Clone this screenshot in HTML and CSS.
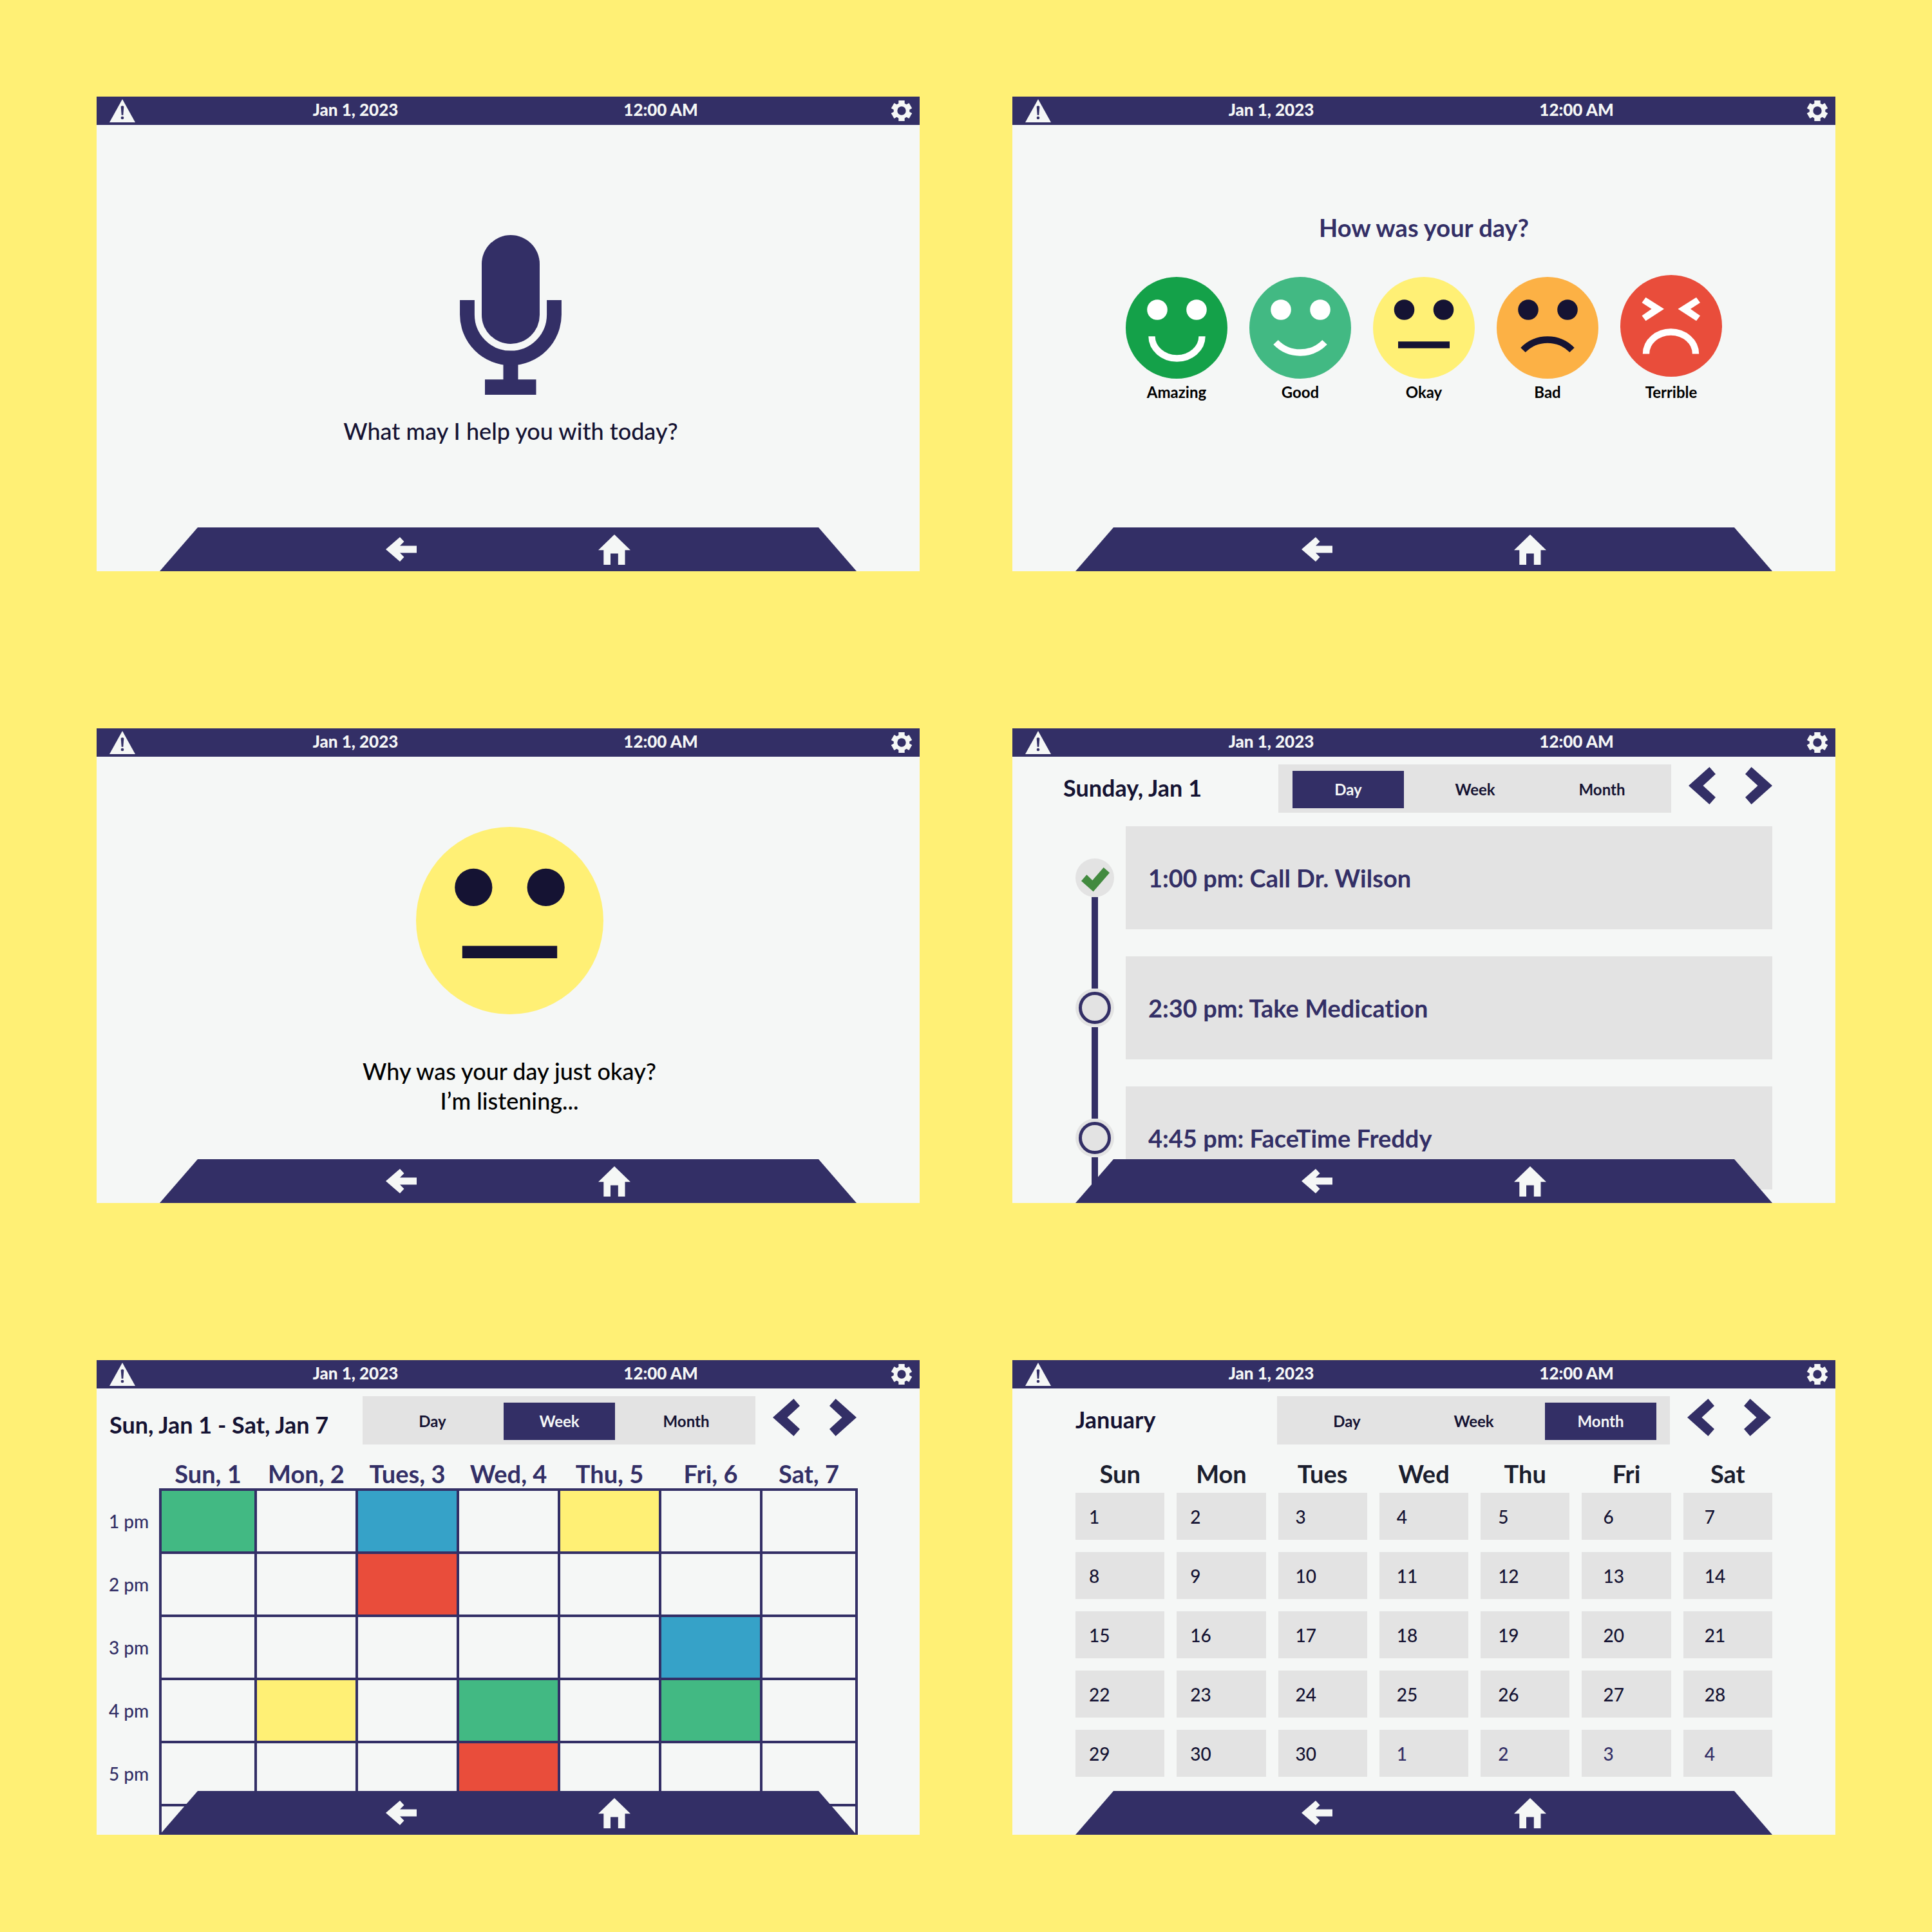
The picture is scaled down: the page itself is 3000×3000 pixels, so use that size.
FILE: index.html
```
<!DOCTYPE html>
<html lang="en">
<head>
<meta charset="utf-8">
<meta name="viewport" content="width=device-width, initial-scale=1">
<title>Daily companion screens</title>
<link rel="stylesheet" href="styles.css">
</head>
<body>
<svg class="sprite" aria-hidden="true">
  <symbol id="warning" viewBox="0 0 40 36"><path class="fill-light" d="M20 0 40 36H0z"/><path class="fill-navy" d="M17.700 11.500Q20 9 22.300 11.500L21.300 24.700H18.700z"/><circle class="fill-navy" cx="20" cy="29" r="2.300"/></symbol>
  <symbol id="gear" viewBox="0 0 32 32"><g class="fill-light"><circle cx="16" cy="16" r="12.300"/><path d="M11.300 0h9.400v32h-9.400z"/><path d="M11.300 0h9.400v32h-9.400z" transform="rotate(60 16 16)"/><path d="M11.300 0h9.400v32h-9.400z" transform="rotate(120 16 16)"/></g><circle class="fill-navy" cx="16" cy="16" r="6.700"/></symbol>
  <symbol id="arrow" viewBox="0 0 48 38"><path class="fill-light" d="M0 19 22 0 28.500 7 22 13.600H48V24.600H22L28.500 31 22 38z"/></symbol>
  <symbol id="home" viewBox="0 0 50 47"><path class="fill-light" d="M25 0 50 24.300H41.500V47H30.800V29.500H19V47H8.300V24.300H0z"/></symbol>
  <symbol id="prev" viewBox="0 0 42 58"><path class="fill-navy" d="M32.400 0 42 11 22.500 29 42 47 32.400 58 0 29z"/></symbol>
  <symbol id="next" viewBox="0 0 42 58"><path class="fill-navy" d="M9.600 0 0 11 19.500 29 0 47 9.600 58 42 29z"/></symbol>
  <symbol id="face-okay" viewBox="0 0 158 158"><circle cx="79" cy="79" r="79" fill="#fff075"/><g class="fill-ink"><circle cx="48.500" cy="51" r="15.800"/><circle cx="109.500" cy="51" r="15.800"/><path d="M39 100.300h80v10.400H39z"/></g></symbol>
</svg>

<main class="board">

  <section class="screen" aria-label="Voice assistant">
    <header class="status"><button class="icon-button" aria-label="Alerts"><svg class="i-warning"><use href="#warning"/></svg></button><time class="status-text">Jan 1, 2023</time><time class="status-text">12:00 AM</time><button class="icon-button end" aria-label="Settings"><svg class="i-gear"><use href="#gear"/></svg></button></header>
    <div class="voice">
      <svg class="mic" viewBox="0 0 158 248" role="img" aria-label="Microphone"><g class="fill-navy"><rect x="34" width="90" height="169" rx="45"/><path d="M67.500 195h23v29.300h28V248H39v-23.700h28.500z"/></g><path d="M11.500 101v22.500a67.500 67.500 0 0 0 135 0V101" fill="none" stroke="#332f66" stroke-width="22.800"/></svg>
      <p class="prompt ink">What may I help you with today?</p>
    </div>
    <nav class="dock" aria-label="Voice screen"><button class="icon-button" aria-label="Back"><svg class="i-arrow"><use href="#arrow"/></svg></button><button class="icon-button" aria-label="Home"><svg class="i-home"><use href="#home"/></svg></button></nav>
  </section>

  <section class="screen" aria-label="Mood check">
    <header class="status"><button class="icon-button" aria-label="Alerts"><svg class="i-warning"><use href="#warning"/></svg></button><time class="status-text">Jan 1, 2023</time><time class="status-text">12:00 AM</time><button class="icon-button end" aria-label="Settings"><svg class="i-gear"><use href="#gear"/></svg></button></header>
    <div class="mood">
      <h2 class="question">How was your day?</h2>
      <div class="faces">
        <button class="face"><svg viewBox="0 0 158 158"><circle cx="79" cy="79" r="79" fill="#14a149"/><circle cx="49" cy="51" r="15.800" fill="#fff"/><circle cx="110" cy="51" r="15.800" fill="#fff"/><path d="M40.500 92.300a39 34.200 0 0 0 78 0" fill="none" stroke="#fff" stroke-width="10.400"/></svg>Amazing</button>
        <button class="face"><svg viewBox="0 0 158 158"><circle cx="79" cy="79" r="79" fill="#42b983"/><circle cx="49" cy="51" r="15.800" fill="#fff"/><circle cx="110" cy="51" r="15.800" fill="#fff"/><path d="M41 101.500a53 53 0 0 0 76 0" fill="none" stroke="#fff" stroke-width="10.400"/></svg>Good</button>
        <button class="face"><svg viewBox="0 0 158 158"><use href="#face-okay"/></svg>Okay</button>
        <button class="face"><svg viewBox="0 0 158 158"><circle cx="79" cy="79" r="79" fill="#fcb145"/><g class="fill-ink"><circle cx="49" cy="51" r="15.800"/><circle cx="110" cy="51" r="15.800"/></g><path d="M41 113.500a53 53 0 0 1 76 0" fill="none" stroke="#151333" stroke-width="10.400"/></svg>Bad</button>
        <button class="face"><svg class="tall" viewBox="0 0 158 161"><circle cx="79" cy="79" r="79" fill="#e94d3b"/><path d="M39.500 34.700 68 52.800 39.500 71.300 33.500 63.300 48.500 52.800 33.500 43zM118 34.700 89.500 52.800 118 71.300 124 63.300 109 52.800 124 43z" fill="#fff"/><path d="M40 122.500a38.500 34 0 0 1 77 0" fill="none" stroke="#fff" stroke-width="10.400"/></svg>Terrible</button>
      </div>
    </div>
    <nav class="dock" aria-label="Mood screen"><button class="icon-button" aria-label="Back"><svg class="i-arrow"><use href="#arrow"/></svg></button><button class="icon-button" aria-label="Home"><svg class="i-home"><use href="#home"/></svg></button></nav>
  </section>

  <section class="screen" aria-label="Mood follow-up">
    <header class="status"><button class="icon-button" aria-label="Alerts"><svg class="i-warning"><use href="#warning"/></svg></button><time class="status-text">Jan 1, 2023</time><time class="status-text">12:00 AM</time><button class="icon-button end" aria-label="Settings"><svg class="i-gear"><use href="#gear"/></svg></button></header>
    <div class="listening">
      <svg class="big-face" role="img" aria-label="Okay face"><use href="#face-okay"/></svg>
      <p class="prompt">Why was your day just okay?<br>I’m listening...</p>
    </div>
    <nav class="dock" aria-label="Follow-up screen"><button class="icon-button" aria-label="Back"><svg class="i-arrow"><use href="#arrow"/></svg></button><button class="icon-button" aria-label="Home"><svg class="i-home"><use href="#home"/></svg></button></nav>
  </section>

  <section class="screen" aria-label="Day calendar">
    <header class="status"><button class="icon-button" aria-label="Alerts"><svg class="i-warning"><use href="#warning"/></svg></button><time class="status-text">Jan 1, 2023</time><time class="status-text">12:00 AM</time><button class="icon-button end" aria-label="Settings"><svg class="i-gear"><use href="#gear"/></svg></button></header>
    <div class="toolbar toolbar-day">
      <h2 class="period">Sunday, Jan 1</h2>
      <div class="tabs"><button class="tab active">Day</button><button class="tab">Week</button><button class="tab">Month</button></div>
      <div class="pager"><button class="icon-button" aria-label="Previous"><svg class="i-chevron"><use href="#prev"/></svg></button><button class="icon-button" aria-label="Next"><svg class="i-chevron"><use href="#next"/></svg></button></div>
    </div>
    <ol class="agenda">
      <li class="event"><div class="track"><span class="lead hidden"></span><svg class="dot" viewBox="0 0 60 60" role="img" aria-label="Done"><circle cx="30" cy="30" r="30" fill="#e3e3e3"/><path d="M43.700 14 53 22.300 27.700 51.400 9 35 17.400 25.200 26.300 34z" fill="#428a3f"/></svg><span class="tail"></span></div><p class="card">1:00 pm: Call Dr. Wilson</p></li>
      <li class="event"><div class="track"><span class="lead"></span><svg class="dot" viewBox="0 0 60 60" role="img" aria-label="To do"><circle cx="30" cy="30" r="30" fill="#e3e3e3"/><circle cx="30" cy="30" r="22.500" fill="none" stroke="#332f66" stroke-width="5"/></svg><span class="tail"></span></div><p class="card">2:30 pm: Take Medication</p></li>
      <li class="event"><div class="track"><span class="lead"></span><svg class="dot" viewBox="0 0 60 60" role="img" aria-label="To do"><circle cx="30" cy="30" r="30" fill="#e3e3e3"/><circle cx="30" cy="30" r="22.500" fill="none" stroke="#332f66" stroke-width="5"/></svg><span class="tail"></span></div><p class="card">4:45 pm: FaceTime Freddy</p></li>
    </ol>
    <nav class="dock" aria-label="Day screen"><button class="icon-button" aria-label="Back"><svg class="i-arrow"><use href="#arrow"/></svg></button><button class="icon-button" aria-label="Home"><svg class="i-home"><use href="#home"/></svg></button></nav>
  </section>

  <section class="screen" aria-label="Week calendar">
    <header class="status"><button class="icon-button" aria-label="Alerts"><svg class="i-warning"><use href="#warning"/></svg></button><time class="status-text">Jan 1, 2023</time><time class="status-text">12:00 AM</time><button class="icon-button end" aria-label="Settings"><svg class="i-gear"><use href="#gear"/></svg></button></header>
    <div class="toolbar toolbar-week">
      <h2 class="period">Sun, Jan 1 - Sat, Jan 7</h2>
      <div class="tabs"><button class="tab">Day</button><button class="tab active">Week</button><button class="tab">Month</button></div>
      <div class="pager"><button class="icon-button" aria-label="Previous"><svg class="i-chevron"><use href="#prev"/></svg></button><button class="icon-button" aria-label="Next"><svg class="i-chevron"><use href="#next"/></svg></button></div>
    </div>
    <div class="week-wrap">
      <table class="week">
        <colgroup><col class="col-hour"><col class="col-edge"><col class="col-day"><col class="col-day"><col class="col-day"><col class="col-day"><col class="col-day"><col class="col-edge"></colgroup>
        <thead><tr><td></td><th scope="col">Sun, 1</th><th scope="col">Mon, 2</th><th scope="col">Tues, 3</th><th scope="col">Wed, 4</th><th scope="col">Thu, 5</th><th scope="col">Fri, 6</th><th scope="col">Sat, 7</th></tr></thead>
        <tbody>
          <tr><th scope="row">1 pm</th><td class="green"></td><td></td><td class="blue"></td><td></td><td class="yellow"></td><td></td><td></td></tr>
          <tr><th scope="row">2 pm</th><td></td><td></td><td class="red"></td><td></td><td></td><td></td><td></td></tr>
          <tr><th scope="row">3 pm</th><td></td><td></td><td></td><td></td><td></td><td class="blue"></td><td></td></tr>
          <tr><th scope="row">4 pm</th><td></td><td class="yellow"></td><td></td><td class="green"></td><td></td><td class="green"></td><td></td></tr>
          <tr><th scope="row">5 pm</th><td></td><td></td><td></td><td class="red"></td><td></td><td></td><td></td></tr>
          <tr><th scope="row"></th><td></td><td></td><td></td><td></td><td></td><td></td><td></td></tr>
        </tbody>
      </table>
    </div>
    <nav class="dock" aria-label="Week screen"><button class="icon-button" aria-label="Back"><svg class="i-arrow"><use href="#arrow"/></svg></button><button class="icon-button" aria-label="Home"><svg class="i-home"><use href="#home"/></svg></button></nav>
  </section>

  <section class="screen" aria-label="Month calendar">
    <header class="status"><button class="icon-button" aria-label="Alerts"><svg class="i-warning"><use href="#warning"/></svg></button><time class="status-text">Jan 1, 2023</time><time class="status-text">12:00 AM</time><button class="icon-button end" aria-label="Settings"><svg class="i-gear"><use href="#gear"/></svg></button></header>
    <div class="toolbar toolbar-month">
      <h2 class="period">January</h2>
      <div class="tabs"><button class="tab">Day</button><button class="tab">Week</button><button class="tab active">Month</button></div>
      <div class="pager"><button class="icon-button" aria-label="Previous"><svg class="i-chevron"><use href="#prev"/></svg></button><button class="icon-button" aria-label="Next"><svg class="i-chevron"><use href="#next"/></svg></button></div>
    </div>
    <div class="month-wrap">
      <table class="month">
        <thead><tr><th scope="col">Sun</th><th scope="col">Mon</th><th scope="col">Tues</th><th scope="col">Wed</th><th scope="col">Thu</th><th scope="col">Fri</th><th scope="col">Sat</th></tr></thead>
        <tbody>
          <tr><td>1</td><td>2</td><td>3</td><td>4</td><td>5</td><td>6</td><td>7</td></tr>
          <tr><td>8</td><td>9</td><td>10</td><td>11</td><td>12</td><td>13</td><td>14</td></tr>
          <tr><td>15</td><td>16</td><td>17</td><td>18</td><td>19</td><td>20</td><td>21</td></tr>
          <tr><td>22</td><td>23</td><td>24</td><td>25</td><td>26</td><td>27</td><td>28</td></tr>
          <tr><td>29</td><td>30</td><td>30</td><td class="other">1</td><td class="other">2</td><td class="other">3</td><td class="other">4</td></tr>
        </tbody>
      </table>
    </div>
    <nav class="dock" aria-label="Month screen"><button class="icon-button" aria-label="Back"><svg class="i-arrow"><use href="#arrow"/></svg></button><button class="icon-button" aria-label="Home"><svg class="i-home"><use href="#home"/></svg></button></nav>
  </section>

</main>
</body>
</html>
```
FILE: styles.css
```
:root {
  --navy: #332f66;
  --ink: #151333;
  --light: #f5f7f6;
  --grey: #e3e3e3;
  --yellow: #fff075;
}

* { box-sizing: border-box; }

body {
  margin: 0;
  background: var(--yellow);
  color: #000;
  font-family: "Gill Sans", "Gill Sans MT", Lato, sans-serif;
  font-variant-ligatures: none;
}

h2, p, ol { margin: 0; padding: 0; }
ol { list-style: none; }
svg { display: block; flex: none; }

button {
  border: 0;
  padding: 0;
  background: none;
  color: inherit;
  font: inherit;
  cursor: pointer;
}

.sprite { position: absolute; width: 0; height: 0; }
.fill-light { fill: var(--light); }
.fill-navy { fill: var(--navy); }
.fill-ink { fill: var(--ink); }

.board {
  display: grid;
  grid-template-columns: 1fr 1fr;
  gap: 244px 144px;
  padding: 150px;
}

.screen {
  position: relative;
  aspect-ratio: 1278 / 737;
  min-width: 0;
  min-height: 0;
  overflow: hidden;
  background: var(--light);
}

/* Status bar */
.status {
  display: grid;
  grid-template-columns: 145fr 474fr 474fr 153fr;
  align-items: center;
  height: 44px;
  padding: 0 12px 0 20px;
  background: var(--navy);
  color: var(--light);
}
.status-text {
  padding-bottom: 4px;
  text-align: center;
  font-size: 26px;
  line-height: 28px;
  font-weight: 900;
}
.icon-button { display: block; justify-self: start; }
.icon-button.end { justify-self: end; }
.i-warning { width: 40px; height: 36px; }
.i-gear { width: 32px; height: 32px; }
.i-arrow { width: 48px; height: 38px; }
.i-home { width: 50px; height: 47px; }
.i-chevron { width: 42px; height: 58px; }

/* Bottom navigation, laid over the screen content */
.dock {
  position: absolute;
  right: 98px;
  bottom: 0;
  left: 98px;
  display: flex;
  justify-content: center;
  align-items: center;
  gap: 282px;
  height: 68px;
  background: var(--navy);
  clip-path: polygon(59px 0, calc(100% - 59px) 0, 100% 100%, 0 100%);
}

/* Conversation screens */
.voice, .mood, .listening {
  display: flex;
  flex-direction: column;
  align-items: center;
}
.voice { gap: 33px; padding: 171px 0 0 8px; }
.mic { width: 158px; height: 248px; }
.prompt {
  text-align: center;
  font-size: 36px;
  line-height: 46px;
  font-weight: 500;
}
.ink { color: var(--ink); }

.mood { gap: 51px; padding-top: 136px; }
.question {
  color: var(--navy);
  font-size: 38px;
  line-height: 46px;
  font-weight: 700;
}
.faces { display: flex; align-items: flex-end; gap: 34px; }
.face {
  display: flex;
  flex-direction: column;
  align-items: center;
  gap: 7px;
  width: 158px;
  font-size: 24px;
  line-height: 28px;
  font-weight: 700;
}
.face svg { width: 158px; height: 158px; }
.face .tall { height: 161px; }

.listening { gap: 65px; padding: 109px 0 0 4px; }
.big-face { width: 291px; height: 291px; }

/* Calendar toolbar */
.toolbar {
  display: flex;
  align-items: flex-start;
  padding-top: 12px;
  padding-right: 98px;
}
.toolbar-day { padding-left: 79px; }
.toolbar-week { padding-left: 20px; }
.toolbar-month { padding-right: 100px; padding-left: 98px; }
.period {
  flex: 1;
  padding-top: 13px;
  color: var(--ink);
  font-size: 36px;
  line-height: 46px;
  font-weight: 700;
  white-space: nowrap;
}
.toolbar-week .period { padding-top: 21px; }
.tabs {
  display: flex;
  gap: 24px;
  padding: 10px 21px 7px 22px;
  background: var(--grey);
}
.tab {
  width: 173px;
  height: 58px;
  color: var(--ink);
  font-size: 24px;
  line-height: 28px;
  font-weight: 700;
}
.tab.active { background: var(--navy); color: var(--light); }
.pager { display: flex; gap: 46px; padding: 4px 0 0 27px; }

/* Day agenda */
.agenda { padding: 21px 98px 0; }
.event {
  display: grid;
  grid-template-columns: 60px 1fr;
  column-gap: 18px;
}
.track { display: flex; flex-direction: column; align-items: center; }
.lead, .tail { width: 10px; background: var(--navy); }
.lead { height: 50px; }
.lead.hidden { visibility: hidden; }
.tail { flex: 1; }
.dot { width: 60px; height: 60px; }
.card {
  display: flex;
  align-items: center;
  height: 160px;
  margin-bottom: 42px;
  padding-left: 35px;
  background: var(--grey);
  color: var(--navy);
  font-size: 38px;
  line-height: 46px;
  font-weight: 700;
}

/* Week grid */
.week-wrap { padding: 0 98px 0 19px; }
.week {
  width: 100%;
  table-layout: fixed;
  border-collapse: collapse;
  color: var(--navy);
}
.col-hour { width: 80px; }
.col-edge { width: 148px; }
.col-day { width: 157px; }
.week th, .week td { padding: 0; white-space: nowrap; }
.week thead th {
  height: 70px;
  vertical-align: bottom;
  font-size: 38px;
  line-height: 46px;
  font-weight: 700;
}
.week tbody tr { height: 98px; }
.week tbody th {
  padding-right: 18px;
  text-align: right;
  font-size: 28px;
  line-height: 32px;
  font-weight: 500;
}
.week tbody td { border: 4px solid var(--navy); }
.green { background: #42b983; }
.blue { background: #36a2c8; }
.yellow { background: var(--yellow); }
.red { background: #e94d3b; }

/* Month grid */
.month-wrap { padding: 0 79px; }
.month {
  width: 100%;
  table-layout: fixed;
  border-spacing: 19px;
  color: var(--ink);
}
.month th {
  height: 37px;
  padding: 15px 0 0;
  color: #1b1e2e;
  font-size: 38px;
  line-height: 22px;
  font-weight: 700;
}
.month td {
  height: 73px;
  padding: 0 0 0 21px;
  background: var(--grey);
  font-size: 28px;
  line-height: 32px;
  font-weight: 500;
}
.month td:nth-child(n + 3) { padding-left: 27px; }
.month td:nth-child(n + 6) { padding-left: 33px; }
.month .other { color: var(--navy); }
```
